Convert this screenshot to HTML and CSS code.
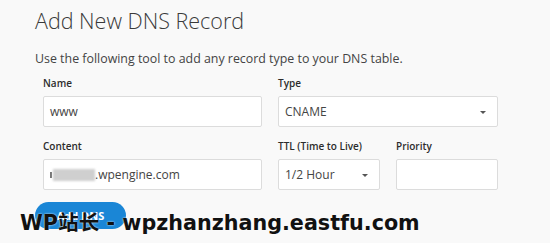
FILE: index.html
```html
<!DOCTYPE html>
<html lang="en">

<head>
    <meta charset="UTF-8">
    <meta name="viewport" content="width=device-width, initial-scale=1.0">
    <title>Add New DNS Record</title>
    <link rel="stylesheet" href="styles.css">
</head>

<body>
    <div class="page">
        <h1>Add New DNS Record</h1>
        <p class="intro">Use the following tool to add any record type to your DNS table.</p>

        <form class="dns-form">
            <div class="row">
                <div class="field">
                    <label>Name</label>
                    <div class="box">www</div>
                </div>
                <div class="field">
                    <label>Type</label>
                    <div class="box select">CNAME <span class="caret"></span></div>
                </div>
            </div>
            <div class="row">
                <div class="field">
                    <label>Content</label>
                    <div class="box"><span class="tick"></span><span class="blur"></span>.wpengine.com</div>
                </div>
                <div class="split">
                    <div class="field">
                        <label>TTL (Time to Live)</label>
                        <div class="box select">1/2 Hour <span class="caret"></span></div>
                    </div>
                    <div class="field">
                        <label>Priority</label>
                        <div class="box"></div>
                    </div>
                </div>
            </div>
        </form>

        <button class="add-btn">Add DNS</button>
    </div>

    <div class="watermark">WP站长 - wpzhanzhang.eastfu.com</div>
</body>

</html>
```

FILE: styles.css
```css
body {
    margin: 0;
    background-color: #f9f9f9;
    font-family: "Open Sans", Arial, sans-serif;
    color: #333;
}

.page {
    padding: 7px 35px 0 35px;
}

h1 {
    margin: 0;
    font-size: 21.5px;
    font-weight: 300;
    line-height: 28px;
    color: #3a3a3a;
}

.intro {
    margin: 15px 0 0 0;
    font-size: 12.4px;
    line-height: 18px;
    color: #444;
}

.dns-form {
    margin: 8px 0 0 8px;
    width: 455px;
}

.row {
    display: grid;
    grid-template-columns: 219px 220px;
    column-gap: 16px;
    margin-bottom: 12px;
}

.split {
    display: grid;
    grid-template-columns: 102px 102px;
    column-gap: 16px;
}

label {
    display: block;
    font-size: 10px;
    font-weight: 600;
    line-height: 14px;
    margin-bottom: 6px;
    color: #2c2c2c;
}

.box {
    position: relative;
    height: 31px;
    box-sizing: border-box;
    border: 1px solid #dcdcdc;
    border-radius: 2px;
    background-color: #fff;
    padding: 0 6px;
    display: flex;
    align-items: center;
    font-size: 12px;
    color: #444;
}

.caret {
    position: absolute;
    right: 11px;
    top: 14px;
    width: 0;
    height: 0;
    border-left: 3px solid transparent;
    border-right: 3px solid transparent;
    border-top: 3px solid #555;
}

.tick {
    display: inline-block;
    width: 2px;
    height: 6px;
    background-color: #777;
    margin-right: 1px;
}

.blur {
    display: inline-block;
    width: 42px;
    height: 12px;
    background-color: #cfcfcf;
    filter: blur(0.8px);
}

.add-btn {
    margin-top: 0;
    width: 91px;
    height: 27px;
    border: none;
    border-radius: 14px;
    background-color: #1a86d6;
    color: #fff;
    font-family: "Open Sans", Arial, sans-serif;
    font-size: 11px;
    font-weight: 700;
}

.watermark {
    position: absolute;
    left: 20px;
    top: 206px;
    font-family: "DejaVu Sans", "Noto Sans CJK SC", sans-serif;
    font-weight: bold;
    font-size: 20.7px;
    color: #111;
    text-shadow: 0 0 2px #fff;
    white-space: nowrap;
}
```
